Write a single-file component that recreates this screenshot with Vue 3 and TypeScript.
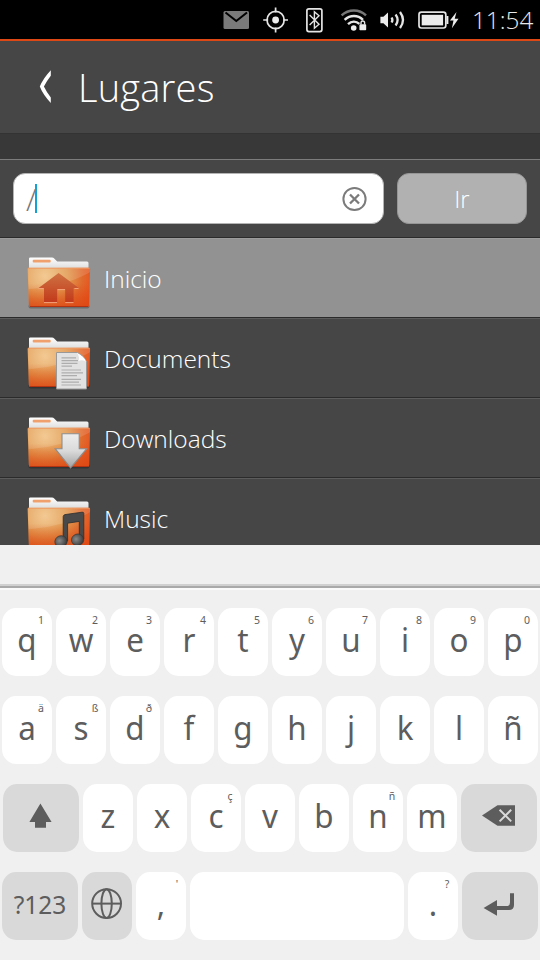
<script setup lang="ts">
interface Key {
  label: string
  alt?: string
}

interface Place {
  name: string
  icon: 'home' | 'document' | 'download' | 'music'
  active?: boolean
}

const places: Place[] = [
  { name: 'Inicio', icon: 'home', active: true },
  { name: 'Documents', icon: 'document' },
  { name: 'Downloads', icon: 'download' },
  { name: 'Music', icon: 'music' },
]

const makeKeys = (letters: string, alts: Record<string, string>): Key[] =>
  [...letters].map((label) => ({ label, alt: alts[label] }))

const topRow = makeKeys('qwertyuiop', {
  q: '1', w: '2', e: '3', r: '4', t: '5', y: '6', u: '7', i: '8', o: '9', p: '0',
})
const middleRow = makeKeys('asdfghjklñ', { a: 'ä', s: 'ß', d: 'ð' })
const bottomRow = makeKeys('zxcvbnm', { c: 'ç', n: 'ñ' })
</script>

<template>
  <div class="phone">
    <header class="status">
      <svg class="status-icons" viewBox="210 0 255 39" width="255" height="39">
        <rect x="223.5" y="11" width="25.5" height="18" rx="1.5" fill="#7a7a7a" />
        <path d="M225.5 12.5L236.3 21L247 12.5" fill="none" stroke="#000" stroke-width="2" />
        <g fill="none" stroke="#e4e4e4" stroke-width="1.7">
          <circle cx="275.6" cy="20" r="8.6" />
          <path d="M275.6 7.5v5M275.6 27.5v5M263.2 20h5M283 20h5" />
          <rect x="306.9" y="8.8" width="15" height="22.8" rx="2" />
          <path d="M309.6 15l9.4 9.2-4.6 4V11.8l4.6 4-9.4 9.2" stroke-width="1.4" />
          <path d="M341.6 15.4c7-6.6 17.6-6.6 24.4 0" stroke="#777" stroke-width="2.4" />
          <path d="M344.6 19.8c5.6-5 13.2-5 18.4 0" stroke-width="2.4" />
          <path d="M348 24.2c3.6-3.4 8-3.4 11.4-.4" stroke-width="2.4" />
          <path d="M361 24.5v-1.7a1.8 1.8 0 0 1 3.6 0v1.7" stroke-width="1.4" />
          <path d="M391.6 17.5q1.6 2.5 0 5M395.6 14.5q4 5.5 0 11M400 12q6 8 0 16" stroke-width="2.3" />
          <rect x="419" y="12.2" width="26.8" height="15.8" rx="2.4" />
        </g>
        <g fill="#ececec">
          <circle cx="275.6" cy="20" r="3.4" />
          <circle cx="353.7" cy="28" r="2.8" />
          <rect x="359.4" y="24.2" width="6.8" height="6" rx=".8" />
          <path d="M380.4 16.8h3l4.6-4.4v15.2l-4.6-4.4h-3z" />
          <rect x="421.7" y="14.8" width="21.4" height="10.6" />
          <rect x="446.4" y="16" width="2" height="8" />
          <path d="M456.5 12l-6.6 8.6h3.6l-1.6 7.6 6.6-9.4h-3.8z" />
        </g>
      </svg>
      <span class="clock">11:54</span>
    </header>

    <main class="content">
      <div class="title-bar">
        <svg class="back" viewBox="38 68 16 38" width="16" height="38">
          <path d="M50.8 70.3Q43 78.6 39.8 86.6Q43 94.8 50.8 103V97.6Q46.5 92 43.9 86.6Q46.5 81.2 50.8 75.7z" fill="#fff" />
        </svg>
        <h1>Lugares</h1>
      </div>
      <div class="band"></div>

      <div class="search">
        <div class="field">
          <span class="path">/</span>
          <span class="caret"></span>
          <svg class="clear" viewBox="0 0 26 26" width="26" height="26">
            <g fill="none" stroke="#7b7b7b" stroke-width="2">
              <circle cx="12.5" cy="13" r="11.1" />
              <path d="M8 8.5l9 9M17 8.5l-9 9" stroke-width="2.3" />
            </g>
          </svg>
        </div>
        <button class="go">Ir</button>
      </div>

      <svg class="defs" width="0" height="0">
        <defs>
          <radialGradient id="front" gradientUnits="userSpaceOnUse" cx="45" cy="276" r="50">
            <stop offset="0" stop-color="#f1c283" />
            <stop offset=".45" stop-color="#e29a50" />
            <stop offset=".75" stop-color="#e06a2e" />
            <stop offset="1" stop-color="#ea4c18" />
          </radialGradient>
          <linearGradient id="depth" x1="0" y1="0" x2="0" y2="1">
            <stop offset=".4" stop-color="#dc4a14" stop-opacity="0" />
            <stop offset="1" stop-color="#dc4a14" stop-opacity=".8" />
          </linearGradient>
          <linearGradient id="paper" x1="0" y1="0" x2="0" y2="1">
            <stop offset="0" stop-color="#fff" />
            <stop offset="1" stop-color="#d5d5d5" />
          </linearGradient>
          <linearGradient id="house" x1="0" y1="0" x2="0" y2="1">
            <stop offset="0" stop-color="#cf7242" />
            <stop offset="1" stop-color="#c23a1b" />
          </linearGradient>
          <linearGradient id="metal" x1="0" y1="0" x2="0" y2="1">
            <stop offset="0" stop-color="#ededed" />
            <stop offset=".5" stop-color="#dadada" />
            <stop offset="1" stop-color="#a2a2a2" />
          </linearGradient>
          <radialGradient id="note" cx=".4" cy=".4" r=".6">
            <stop offset="0" stop-color="#8a8a8a" />
            <stop offset="1" stop-color="#3c3c3c" />
          </radialGradient>
        </defs>
      </svg>

      <ul class="places">
        <li v-for="place in places" :key="place.name" :class="{ active: place.active }">
          <svg class="folder" viewBox="26 254 68 60" width="68" height="60">
            <rect x="28.5" y="304" width="61" height="4.6" rx="2" fill="#000" opacity=".25" />
            <path d="M29 271V258.7q0-1.2 1.2-1.2H52q1.4 0 2.2 1l3 2.9H87q1.5 0 1.5 1.5V271z" fill="url(#paper)" />
            <rect x="32.7" y="259.8" width="18" height="2.6" rx="1" fill="#f0a06c" />
            <path d="M27.6 269q0-1.2 1.2-1.2H89q1.2 0 1.1 1.2l-1 36q-.1 2-2 2H31q-2 0-2.1-2z" fill="url(#front)" />
            <path d="M27.6 269q0-1.2 1.2-1.2H89q1.2 0 1.1 1.2l-1 36q-.1 2-2 2H31q-2 0-2.1-2z" fill="url(#depth)" />
            <path d="M28 268H90V272C76 281 50 288 28.7 289z" fill="#fff" opacity=".13" />
            <path d="M30 306.5H88" stroke="#ad3011" stroke-width=".9" />
            <path d="M28.2 268.3H89.6" stroke="#ee9a65" stroke-width=".9" />

            <template v-if="place.icon === 'home'">
              <path d="M44 302.6H57M65.3 302.6H73.5M57.5 289.6H65M38.5 288.5H43M74.5 288.5H78.5" stroke="#f4a27c" stroke-width="1" />
              <path d="M58.6 273L38.6 288H44V302H57.2V289H65.2V302H73.6V288H78.8z" fill="url(#house)" />
            </template>
            <template v-else-if="place.icon === 'document'">
              <path d="M56.5 272.5H77.5Q84 276 86.5 281.5V309H56.5z" fill="#e2e2e2" stroke="#999" stroke-width="1" />
              <path d="M77 273Q80 277 78.5 281Q82 279.5 86 281.5Q84 276 77 273z" fill="#fff" />
              <path d="M61.5 277.8H76M61.5 280.6H78M61.5 283.4H77.5M61.5 286.2H72M61.5 290H81M61.5 292.8H83M61.5 295.6H77M61.5 299.4H81M61.5 302.2H79M61.5 305H81" stroke="#adadad" stroke-width="1.2" />
            </template>
            <template v-else-if="place.icon === 'download'">
              <path d="M62 273.7H79.2V288.7H86.7L70.6 307.8L55.2 288.7H62z" fill="url(#metal)" stroke="#8d8d8d" stroke-width="1.1" />
            </template>
            <template v-else>
              <path d="M63.2 276.5Q63.4 275 65 274.6L82 272.2Q83.8 272 83.8 273.4V299H79.3V281.4L67.6 283.2V301H63.2z" fill="#494949" stroke="#2d2d2d" stroke-width=".8" />
              <ellipse cx="61" cy="301.5" rx="6.2" ry="5.8" transform="rotate(-18 61 301.5)" fill="url(#note)" stroke="#333" stroke-width=".6" />
              <ellipse cx="77.6" cy="299.8" rx="6.2" ry="5.8" transform="rotate(-18 77.6 299.8)" fill="url(#note)" stroke="#333" stroke-width=".6" />
            </template>
          </svg>
          <span>{{ place.name }}</span>
        </li>
      </ul>
    </main>

    <section class="keyboard">
      <div class="suggestions"></div>
      <div class="rows">
        <div class="row">
          <div v-for="key in topRow" :key="key.label" class="key">
            <span>{{ key.label }}</span><sup v-if="key.alt">{{ key.alt }}</sup>
          </div>
        </div>
        <div class="row">
          <div v-for="key in middleRow" :key="key.label" class="key">
            <span>{{ key.label }}</span><sup v-if="key.alt">{{ key.alt }}</sup>
          </div>
        </div>
        <div class="row shifted">
          <div class="key action">
            <svg viewBox="0 0 76 68" width="76" height="68">
              <path d="M37.4 19.4L48.6 38H43V43.8H32V38H26.4z" fill="#5d5d5d" />
            </svg>
          </div>
          <div v-for="key in bottomRow" :key="key.label" class="key">
            <span>{{ key.label }}</span><sup v-if="key.alt">{{ key.alt }}</sup>
          </div>
          <div class="key action">
            <svg viewBox="0 0 76 68" width="76" height="68">
              <path d="M21 31.5L36.5 21.2H54V41.8H36.5z" fill="#5d5d5d" />
              <path d="M38.6 25.8l11.6 11.6M50.2 25.8L38.6 37.4" stroke="#d9d9d9" stroke-width="2" />
            </svg>
          </div>
        </div>
        <div class="row">
          <div class="key action symbols">?123</div>
          <div class="key globe">
            <svg viewBox="0 0 50 68" width="50" height="68">
              <g fill="none" stroke="#5d5d5d" stroke-width="2">
                <circle cx="24.6" cy="31.6" r="14.4" />
                <ellipse cx="24.6" cy="31.6" rx="5.2" ry="14.4" />
                <path d="M10.2 31.6H39" />
              </g>
            </svg>
          </div>
          <div class="key"><span>,</span><sup class="tick">'</sup></div>
          <div class="key space"></div>
          <div class="key"><span>.</span><sup>?</sup></div>
          <div class="key action">
            <svg viewBox="0 0 76 68" width="76" height="68">
              <path d="M21.6 36L35 28V34H44.2Q48 34 48 30.4V21.2H52V33Q52 38 47 38H35V43.8z" fill="#5d5d5d" />
            </svg>
          </div>
        </div>
      </div>
    </section>
  </div>
</template>

<style>
body {
  margin: 0;
}
</style>

<style scoped>
.phone {
  width: 540px;
  height: 960px;
  display: flex;
  flex-direction: column;
  overflow: hidden;
  background: #464646;
  font-family: "Open Sans", "Noto Sans", sans-serif;
}
.status {
  box-sizing: border-box;
  flex: none;
  height: 41px;
  background: #000;
  border-bottom: 2px solid #dd4814;
  display: flex;
  justify-content: flex-end;
  padding-right: 6px;
}
.status-icons {
  flex: none;
}
.clock {
  width: 62px;
  margin-left: 7px;
  font-size: 24.3px;
  line-height: 40px;
  font-weight: 300;
  color: #e8e8e8;
  white-space: nowrap;
}
.content {
  height: 504px;
  overflow: hidden;
  flex: none;
}
.title-bar {
  height: 92px;
  display: flex;
  align-items: center;
  padding-left: 38px;
}
h1 {
  margin: 0 0 0 24px;
  font-size: 38px;
  line-height: 92px;
  font-weight: 300;
  letter-spacing: 0.2px;
  color: #fff;
}
.band {
  box-sizing: border-box;
  height: 27px;
  background: #383838;
  border-top: 1px solid #333;
  border-bottom: 1px solid #7c7c7c;
}
.search {
  box-sizing: border-box;
  height: 77px;
  padding: 13.4px 13px 0;
  display: flex;
  gap: 13px;
}
.field,
.go {
  box-sizing: border-box;
  height: 51px;
  border-radius: 12px;
}
.field {
  width: 371px;
  background: #fff;
  border: 1px solid #b4b4b4;
  display: flex;
  align-items: center;
  padding: 0 15px 0 12px;
}
.path {
  width: 9px;
  font-size: 31px;
  font-weight: 300;
  color: #777;
}
.caret {
  width: 2px;
  height: 29px;
  background: #12a3d4;
}
.clear {
  margin-left: auto;
}
.go {
  width: 130px;
  padding: 0;
  background: #b1b1b1;
  border: 1px solid #969696;
  color: #fff;
  font-family: inherit;
  font-size: 24px;
  font-weight: 300;
}
.defs {
  display: block;
}
.places {
  list-style: none;
  margin: 0;
  padding: 0;
}
.places li {
  box-sizing: border-box;
  height: 80px;
  border-top: 1px solid #2b2b2b;
  box-shadow: inset 0 1px #5c5c5c;
  display: flex;
  padding-left: 26px;
  color: #fff;
  font-size: 24.5px;
  font-weight: 300;
  line-height: 82px;
}
.places li.active {
  background: #929292;
  box-shadow: inset 0 1px #9c9c9c;
}
.folder {
  flex: none;
  margin: 16px 10px 0 0;
}
.keyboard {
  flex: 1;
  background: #f0f0f0;
  color: #5d5d5d;
}
.suggestions {
  box-sizing: border-box;
  height: 43px;
  border-bottom: 2px solid #a9a9a9;
  box-shadow: inset 0 -2px #d0d0d0, 0 2px #fafafa;
}
.rows {
  padding: 20px 2px;
  display: flex;
  flex-direction: column;
  gap: 20px;
}
.row {
  display: flex;
  gap: 4px;
}
.shifted {
  padding-left: 1px;
}
.key {
  position: relative;
  box-sizing: border-box;
  flex: none;
  width: 50px;
  height: 68px;
  border-radius: 14px / 15px;
  background: #fff;
  font-family: "Noto Sans", sans-serif;
  font-size: 33px;
  line-height: 64px;
  text-align: center;
}
.key span {
  display: block;
  transform: scaleX(0.95);
}
.key sup {
  position: absolute;
  top: 6px;
  right: 6px;
  font-size: 10.5px;
  line-height: 13px;
  min-width: 10px;
}
.key .tick {
  right: 4px;
}
.key svg {
  display: block;
}
.action {
  width: 76px;
  background: #d9d9d9;
}
.globe {
  background: #d9d9d9;
}
.symbols {
  font-size: 24.5px;
  line-height: 66px;
}
.space {
  width: 214px;
}
</style>
